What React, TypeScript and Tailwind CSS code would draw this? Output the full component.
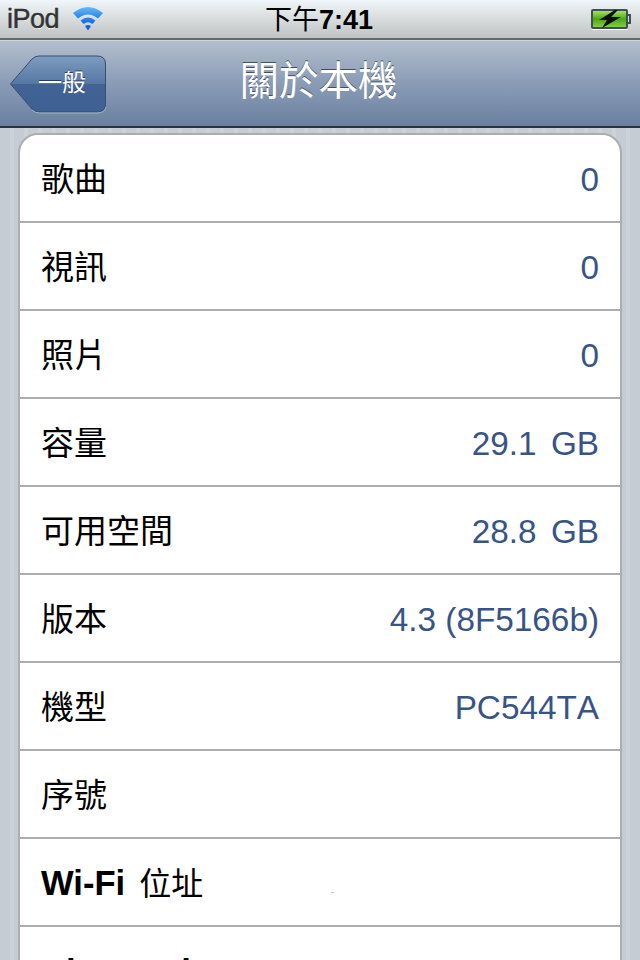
import type { ReactNode } from "react";

const ROWS: { label: ReactNode; value?: string }[] = [
  { label: "歌曲", value: "0" },
  { label: "視訊", value: "0" },
  { label: "照片", value: "0" },
  { label: "容量", value: "29.1 GB" },
  { label: "可用空間", value: "28.8 GB" },
  { label: "版本", value: "4.3 (8F5166b)" },
  { label: "機型", value: "PC544TA" },
  { label: "序號" },
  {
    label: (
      <>
        <span className="text-[34.6px] font-bold">Wi-Fi</span>
        <span className="ml-[14px] text-[32px]">位址</span>
      </>
    ),
  },
  { label: <span className="text-[34.6px] font-bold">Bluetooth</span> },
];

const FONT = "font-['Liberation_Sans','Noto_Sans_CJK_TC',sans-serif]";

function WifiIcon() {
  return (
    <svg width="30" height="24" viewBox="0 0 30 24" className="shrink-0">
      <defs>
        <linearGradient id="wifi" gradientUnits="userSpaceOnUse" x1="0" y1="0" x2="0" y2="24">
          <stop offset="0" stopColor="#6ab8f6" />
          <stop offset="0.5" stopColor="#1f7fe8" />
          <stop offset="1" stopColor="#0a55cc" />
        </linearGradient>
      </defs>
      <path d="M0 6 Q15 -6 30 6 L25 11.5 Q15 3.5 5 11.5 Z" fill="url(#wifi)" />
      <path d="M7.5 13.5 Q15 7.5 22.5 13.5 L19.5 17 Q15 13.5 10.5 17 Z" fill="url(#wifi)" />
      <path d="M12 19 Q15 17 18 19 L15 23.5 Z" fill="url(#wifi)" />
    </svg>
  );
}

function BatteryIcon() {
  return (
    <div className="flex items-center">
      <div className="relative h-[20px] w-[37px] rounded-[2px] border-2 border-[#3f4f55] bg-gradient-to-b from-[#a8e05a] via-[#46a80e] to-[#86cc40] shadow-[0_1px_0_#fff]">
        <svg width="26" height="18" viewBox="0 0 26 18" className="absolute left-[4px] top-[-1px]">
          <path d="M18 0 L2 10 L10 10 L5 18 L24 7 L14 7 L21 0 Z" fill="#0a0f08" />
        </svg>
      </div>
      <div className="h-[10px] w-[3px] rounded-r-[1px] border-y-2 border-r-2 border-[#3f4f55]" />
    </div>
  );
}

function StatusBar() {
  return (
    <div className="relative flex h-[38px] items-center justify-between bg-gradient-to-b from-[#f0f6f9] via-[#d8dcdd] to-[#bfc3c4] pl-[7px] pr-[9px]">
      <div className="flex items-center gap-[14px]">
        <span className="text-[27px] leading-none tracking-[-0.5px] text-[#333] [-webkit-text-stroke:0.5px_#333] [text-shadow:0_1px_0_#fff]">
          iPod
        </span>
        <WifiIcon />
      </div>
      <div className="absolute inset-x-0 top-[5px] pr-[2px] text-center text-[27px] leading-[30px] text-black">
        下午<span className="font-bold">7:41</span>
      </div>
      <BatteryIcon />
    </div>
  );
}

function BackButton() {
  return (
    <div className="relative ml-[10px] h-[59px] w-[96px]">
      <svg width="96" height="60" viewBox="0 0 96 60" className="absolute inset-0">
        <defs>
          <linearGradient id="back" x1="0" y1="0" x2="0" y2="1">
            <stop offset="0" stopColor="#7e9cc0" />
            <stop offset="0.5" stopColor="#5577a3" />
            <stop offset="0.5" stopColor="#426394" />
            <stop offset="1" stopColor="#3f6093" />
          </linearGradient>
        </defs>
        <path
          d="M0.5 30 L22 5 Q25 2 29 2 H87 Q95.5 2 95.5 10 V50 Q95.5 58 87 58 H29 Q25 58 22 55 Z"
          fill="url(#back)"
          stroke="#3a4d6c"
          strokeWidth="1"
        />
        <path d="M22 56 Q25 59 29 59 H87 Q95 59 96 53" fill="none" stroke="#9fb0c8" strokeWidth="1" />
      </svg>
      <div className="absolute inset-0 flex items-center justify-center pl-[8px] text-[24px] text-white [text-shadow:0_-1px_0_#2c3f5c]">
        一般
      </div>
    </div>
  );
}

function NavBar() {
  return (
    <div className="relative flex h-[90px] items-center border-t-2 border-b-2 border-t-[#66696b] border-b-[#2d3239] bg-gradient-to-b from-[#b4bfce] via-[#8a9cb6] to-[#6b80a0] shadow-[inset_0_1px_0_#cdd4de]">
      <BackButton />
      <div className="absolute inset-x-0 top-[18px] pr-[3px] text-center text-[39.5px] leading-[46px] text-white [text-shadow:0_-1px_0_#444f63]">
        關於本機
      </div>
    </div>
  );
}

function Row({ label, value, last, speck }: { label: ReactNode; value?: string; last: boolean; speck?: boolean }) {
  return (
    <div
      className={`relative flex h-[88px] shrink-0 items-center justify-between pb-[1px] pl-[21px] pr-[21px] pt-[4px] ${
        last ? "" : "border-b-2 border-[#adadad]"
      }`}
    >
      <span className="text-[33px] leading-none text-black">{label}</span>
      {value && (
        <span
          className={`text-[33.3px] leading-none text-[#385487] [font-kerning:none] ${
            value.endsWith("GB") ? "[word-spacing:5px]" : ""
          }`}
        >
          {value}
        </span>
      )}
      {speck && <div className="absolute left-[311px] top-[53px] h-px w-[3px] bg-[#b9c2d2]" />}
    </div>
  );
}

export default function App() {
  return (
    <div className={`flex h-[960px] w-[640px] flex-col overflow-hidden bg-[#c5ccd4] ${FONT}`}>
      <StatusBar />
      <NavBar />
      <div className="min-h-0 flex-1 bg-[repeating-linear-gradient(90deg,#c5ccd4_0,#c5ccd4_10px,#cbd2d8_10px,#cbd2d8_14px)] px-[18px] pt-[5px]">
        <div className="flex flex-col overflow-hidden rounded-t-[20px] border-2 border-[#adadad] bg-white">
          {ROWS.map((row, i) => (
            <Row key={i} label={row.label} value={row.value} last={i === ROWS.length - 1} speck={i === 8} />
          ))}
        </div>
      </div>
    </div>
  );
}
